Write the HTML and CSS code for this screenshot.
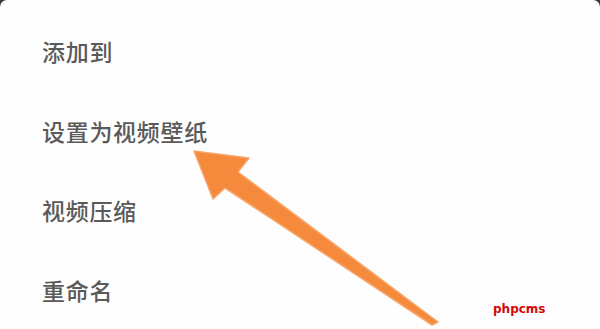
FILE: index.html
```html
<!DOCTYPE html>
<html lang="zh-CN">
<head>
	<meta charset="UTF-8">
	<title>设置为视频壁纸</title>
	<link rel="stylesheet" href="styles.css">
</head>
<body>
	<div class="sheet">
		<ul class="menu">
			<li class="menu_item">添加到</li>
			<li class="menu_item">设置为视频壁纸</li>
			<li class="menu_item">视频压缩</li>
			<li class="menu_item">重命名</li>
		</ul>
		<!-- 标注箭头 -->
		<svg class="arrow" width="600" height="329" viewBox="0 0 600 329">
			<polygon points="194,151 249,158 238,172 438,322 432,325 225,188 213,199" fill="#f5893c" stroke="#f7a66b" stroke-width="1.5" stroke-linejoin="round"/>
		</svg>
		<span class="mark">phpcms</span>
	</div>
</body>
</html>
```

FILE: styles.css
```css
body,ul,li{margin:0;padding:0}
ul{list-style-type: none;}

html,body{
	width: 600px;
	height: 329px;
	overflow: hidden;
	background-color: #3a3a3a;
}

.sheet{
	width: 600px;
	height: 329px;
	background-color: #fefefe;
	border-radius: 7px 7px 0 0;
	position: relative;
}

.menu{
	padding: 11px 0 0 42px;
}

.menu_item{
	height: 79.7px;
	line-height: 80px;
	font-family: "Noto Sans CJK SC", sans-serif;
	font-size: 23px;
	font-weight: 500;
	letter-spacing: 0.7px;
	color: #5a5a5a;
}

.arrow{
	position: absolute;
	left: 0;
	top: 0;
}

.mark{
	position: absolute;
	left: 493px;
	top: 302px;
	font-family: "DejaVu Sans", sans-serif;
	font-weight: bold;
	font-size: 12px;
	color: #d40808;
}
```
